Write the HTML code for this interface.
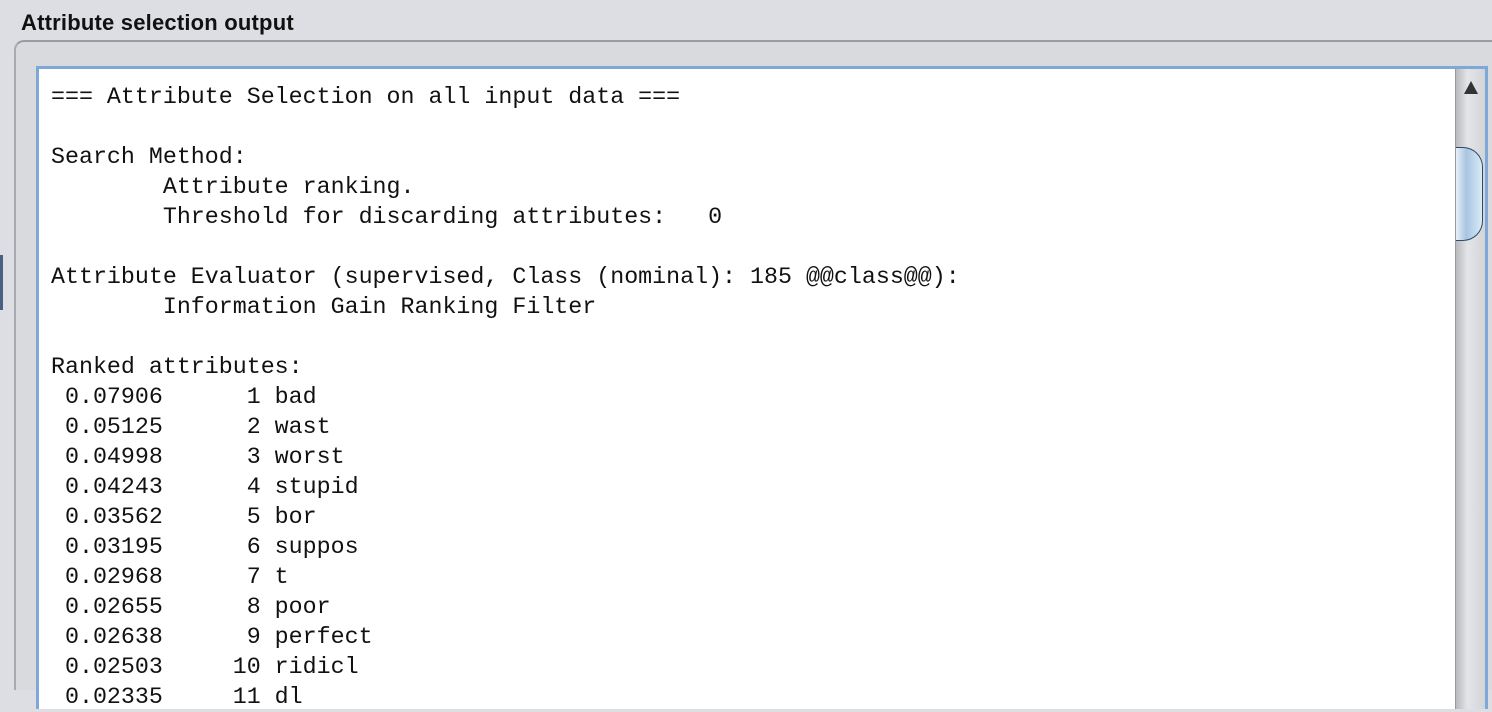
<!DOCTYPE html>
<html><head><meta charset="utf-8"><style>
html,body{margin:0;padding:0;width:1492px;height:690px;overflow:hidden;background:#dcdee3;}
.title{position:absolute;left:21px;top:10px;font:bold 22px "Liberation Sans",sans-serif;color:#111;letter-spacing:0.2px;}
.panel{position:absolute;left:14px;top:40px;width:1478px;height:650px;border-top:2px solid #9a9ca0;border-left:2px solid #a8aaae;border-radius:10px 0 0 0;background:#d8dade;box-sizing:border-box;}
.ta{position:absolute;left:36px;top:66px;width:1446px;height:640px;border-top:3px solid #7fa8d8;border-left:3px solid #7fa8d8;border-right:3px solid #7fa8d8;background:#fff;}
.txt{position:absolute;left:12px;top:13px;margin:0;font:23.3px/30px "Liberation Mono",monospace;color:#111;white-space:pre;}
.sb{position:absolute;right:0;top:0;width:29px;height:100%;background:linear-gradient(90deg,#b8babd,#e4e5e8 40%,#d2d4d7);border-left:1px solid #999;}
.arr{position:absolute;left:8px;top:12px;width:0;height:0;border-left:7px solid transparent;border-right:7px solid transparent;border-bottom:13px solid #333;}
.thumb{position:absolute;left:0;top:78px;width:26px;height:92px;border:1.5px solid #2c4a6a;border-left:none;border-radius:0 20px 20px 0;background:linear-gradient(90deg,#e8f0f8,#a9c4e0 40%,#d8ecf8);}
.lft{position:absolute;left:0;top:255px;width:3px;height:55px;background:#4a6080;}
</style></head><body>
<div class="title">Attribute selection output</div>
<div class="lft"></div>
<div class="panel"></div>
<div class="ta">
<pre class="txt">=== Attribute Selection on all input data ===

Search Method:
        Attribute ranking.
        Threshold for discarding attributes:   0

Attribute Evaluator (supervised, Class (nominal): 185 @@class@@):
        Information Gain Ranking Filter

Ranked attributes:
 0.07906      1 bad
 0.05125      2 wast
 0.04998      3 worst
 0.04243      4 stupid
 0.03562      5 bor
 0.03195      6 suppos
 0.02968      7 t
 0.02655      8 poor
 0.02638      9 perfect
 0.02503     10 ridicl
 0.02335     11 dl</pre>
<div class="sb"><div class="arr"></div><div class="thumb"></div></div>
</div>
</body></html>
